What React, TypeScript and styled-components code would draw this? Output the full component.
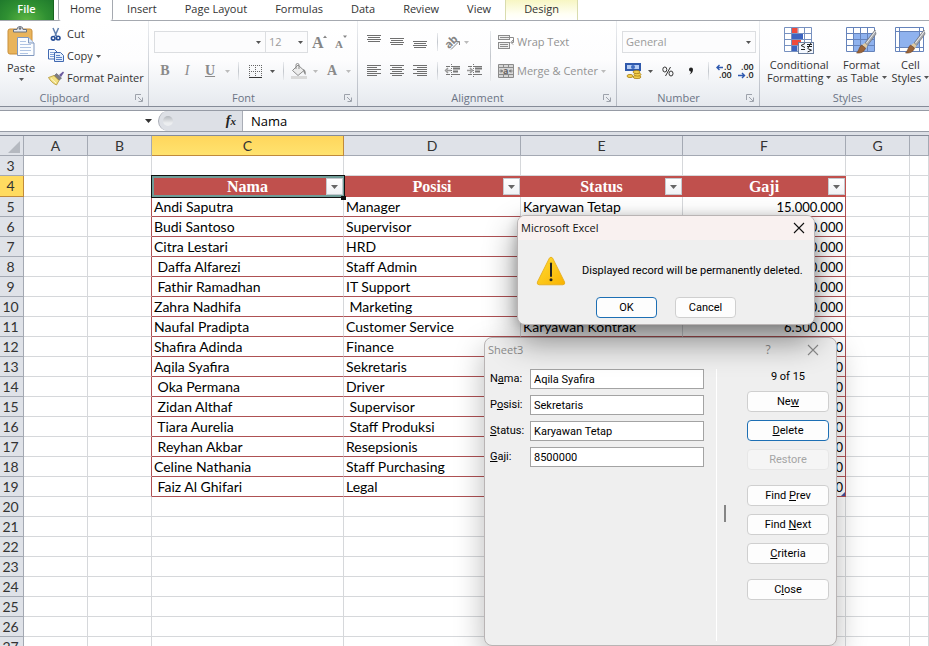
import React from 'react';
import styled, { createGlobalStyle, css } from 'styled-components';

const ui = '"Open Sans", "Noto Sans", sans-serif';
const sheetFont = 'Lato, "Open Sans", sans-serif';
const dialogFont = 'Roboto, "Open Sans", sans-serif';

const GlobalStyle = createGlobalStyle`
  *, *::before, *::after { box-sizing: border-box; }
  body { margin: 0; background: #fff; overflow: hidden; }
  button, input, select { font: inherit; color: inherit; margin: 0; padding: 0; border: 0; background: none; border-radius: 0; outline: none; }
  svg { display: block; flex: none; overflow: visible; }
`;

const Page = styled.div`
  display: flex;
  flex-direction: column;
  height: 100vh;
  overflow: hidden;
  position: relative;
  background: #fff;
  color: #333;
  font: 11px/14px ${ui};
`;

/* ---------- Tabs ---------- */
const TabBar = styled.nav`
  display: flex;
  height: 21px;
  flex: none;
  border-bottom: 1px solid #a5a9b0;
  background: #fff;
`;
const Tab = styled.button<{ $kind?: 'file' | 'active' | 'context' }>`
  padding: 0 14px 2px;
  height: 20px;
  white-space: nowrap;
  ${(p) => p.$kind === 'file' && css`
    width: 54px;
    margin-right: 4px;
    color: #fff;
    font-weight: 600;
    background: radial-gradient(ellipse at 50% 100%, #5cb543 0%, #2f9032 55%, #1f7a2c 100%);
    border-right: 1px solid #17651f;
  `}
  ${(p) => p.$kind === 'active' && css`
    height: 21px;
    padding: 0 11px 3px;
    background: #fff;
    border: solid #a5a9b0;
    border-width: 0 1px;
    border-radius: 0 0 3px 3px;
    border-bottom: 0;
  `}
  ${(p) => p.$kind === 'context' && css`
    padding: 0 18px 2px;
    background: linear-gradient(#f7f6c3, #fffff4 70%, #fff);
    border: solid #d9dcae;
    border-width: 0 1px;
  `}
`;

/* ---------- Ribbon ---------- */
const Ribbon = styled.div`
  display: flex;
  flex: none;
  height: 86px;
  overflow: hidden;
  border-bottom: 1px solid #858b98;
  background: linear-gradient(#fff 0%, #fdfdfe 45%, #eceff3 85%, #e6e9ee 100%);
`;
const Group = styled.section<{ $w: number }>`
  flex: 0 0 ${(p) => p.$w}px;
  display: flex;
  flex-direction: column;
  border-right: 1px solid;
  border-image: linear-gradient(#eceef1, #b3b8c1) 1;
`;
const GroupBody = styled.div`
  flex: 1;
  display: flex;
  padding-left: 5px;
`;
const GroupFooter = styled.footer<{ $plain: boolean }>`
  display: grid;
  grid-template-columns: ${(p) => (p.$plain ? '1fr' : '1fr 19px')};
  align-items: center;
  justify-items: center;
  height: 16px;
  padding-bottom: 1px;
  color: #6b7485;
`;
const Rows = styled.div`
  display: flex;
  flex-direction: column;
  gap: 7px;
  padding-top: 10px;
`;
const Row = styled.div`
  display: flex;
  align-items: center;
  height: 22px;
`;
const Tool = styled.button<{ $w?: number }>`
  display: flex;
  align-items: center;
  justify-content: center;
  width: ${(p) => p.$w ?? 22}px;
  height: 22px;
  color: #8a8a8a;
`;
const Glyph = styled.span<{ $v?: 'b' | 'i' | 'u' }>`
  font: bold 14px/16px "Liberation Serif", serif;
  ${(p) => p.$v === 'i' && 'font-style: italic; font-weight: normal;'}
  ${(p) => p.$v === 'u' && 'text-decoration: underline;'}
`;
const Sep = styled.i<{ $tall?: boolean }>`
  flex: none;
  width: 1px;
  height: ${(p) => (p.$tall ? 50 : 18)}px;
  margin: ${(p) => (p.$tall ? '10px 7px 0 4px' : '0 4px 0 5px')};
  background: linear-gradient(#e9ebee, #c3c7cd 50%, #e9ebee);
`;
const SmallCommand = styled.button<{ $muted?: boolean }>`
  display: flex;
  align-items: center;
  gap: 3px;
  height: 22px;
  white-space: nowrap;
  color: ${(p) => (p.$muted ? '#929292' : '#333')};
`;
const CommandList = styled.div`
  display: flex;
  flex-direction: column;
  padding: 2px 0 0 11px;
`;
const BigCommand = styled.button`
  display: flex;
  flex-direction: column;
  align-items: center;
  padding: 4px 2px 0;
  line-height: 13px;
  white-space: nowrap;
  & > svg:first-child { margin-bottom: 4px; }
  & > svg:last-child { margin-top: 4px; }
`;
const BigLine = styled.span`
  display: flex;
  align-items: center;
  gap: 3px;
`;
const StyleCommands = styled.div`
  display: flex;
  gap: 1px;
  white-space: nowrap;
`;
const Combo = styled.label<{ $w: number }>`
  display: grid;
  align-items: center;
  width: ${(p) => p.$w}px;
  height: 22px;
  border: 1px solid #dcdee1;
  background: #fcfcfd;
  color: #9b9b9b;
  & + & { border-left: 0; }
  & > select { grid-area: 1 / 1; appearance: none; width: 100%; height: 20px; padding-left: 3px; }
  & > svg { grid-area: 1 / 1; justify-self: end; margin-right: 4px; pointer-events: none; }
`;

/* ---------- Formula bar ---------- */
const FormulaBar = styled.div`
  display: flex;
  flex: none;
  height: 22px;
  margin: 3px 0;
  border: solid #969ba5;
  border-width: 1px 0;
  background: #fff;
`;
const BarBand = styled.div`
  flex: none;
  background: #dde0e6;
`;
const NameBox = styled.label`
  display: flex;
  align-items: center;
  width: 158px;
  & > input { flex: 1; min-width: 0; }
  & > svg { margin-right: 6px; }
`;
const FxArea = styled.div`
  display: flex;
  align-items: center;
  justify-content: space-between;
  width: 85px;
  padding: 0 6px 0 4px;
  background: #dde0e6;
  border: 1px solid #a9adb6;
  border-width: 0 1px;
  border-radius: 10px 0 0 10px;
`;
const Knob = styled.span`
  width: 10px;
  height: 10px;
  border-radius: 50%;
  background: linear-gradient(#b4b8be, #eceef0 70%);
`;
const FxButton = styled.button`
  font: italic bold 14px/16px "Liberation Serif", serif;
  color: #222;
  & > small { font-size: 11px; }
`;
const FormulaInput = styled.input`
  flex: 1;
  min-width: 0;
  padding: 0 8px;
  font: 13px/18px ${ui};
  color: #000;
`;

/* ---------- Sheet ---------- */
const SheetArea = styled.main`
  flex: 1;
  min-height: 0;
  overflow: hidden;
  border-top: 1px solid #858b98;
`;
const Grid = styled.table`
  width: 100%;
  table-layout: fixed;
  border-collapse: separate;
  border-spacing: 0;
  font: 14px/18px ${sheetFont};
  color: #000;
`;
const Col = styled.col<{ $w?: number }>`
  ${(p) => p.$w && `width: ${p.$w}px;`}
`;
const ColHead = styled.th<{ $on?: boolean }>`
  height: 20px;
  padding: 0;
  font-weight: normal;
  color: #333;
  border: solid ${(p) => (p.$on ? '#c08a3c' : '#a4a9b3')};
  border-width: 0 1px 1px 0;
  background: ${(p) => (p.$on ? 'linear-gradient(#ffd65c, #ffe36f)' : '#dfe2e8')};
`;
const Corner = styled(ColHead)`
  & > svg { margin: 2px 3px 0 auto; }
`;
const RowHead = styled.th<{ $on?: boolean }>`
  padding: 0 2px 0 0;
  font-weight: normal;
  color: #333;
  border: solid ${(p) => (p.$on ? '#c08a3c' : '#a4a9b3')};
  border-width: 0 1px 1px 0;
  background: ${(p) => (p.$on ? '#ffdb60' : '#dfe2e8')};
`;
const Line = styled.tr<{ $tall?: boolean }>`
  height: ${(p) => (p.$tall ? 21 : 20)}px;
`;
const Cell = styled.td<{ $edge?: boolean; $data?: boolean; $num?: boolean }>`
  padding: 1px 2px 0;
  overflow: hidden;
  white-space: pre;
  border: solid #d6d8db;
  border-width: 0 1px 1px 0;
  ${(p) => p.$data && 'border-bottom-color: #ae5154;'}
  ${(p) => p.$edge && 'border-right-color: #ae5154;'}
  ${(p) => p.$num && 'text-align: right; font-size: 13px; position: relative;'}
`;
const HeadCell = styled.th<{ $selected?: boolean }>`
  position: relative;
  padding: 0;
  background: #c0504d;
  color: #fff;
  font: bold 16px/18px "Liberation Serif", serif;
  ${(p) => p.$selected && css`
    z-index: 1;
    &::before {
      content: '';
      position: absolute;
      right: -2px;
      bottom: -3px;
      width: 5px;
      height: 4px;
      background: #111;
      z-index: 2;
    }
    &::after {
      content: '';
      position: absolute;
      inset: 0;
      border: 2px solid #6f9c97;
      outline: 1px solid #111;
      pointer-events: none;
    }
  `}
`;
const HeadContent = styled.div`
  display: grid;
  grid-template-columns: 1fr 17px;
  align-items: center;
  padding-right: 1px;
  & > span { grid-area: 1 / 1 / 2 / 3; }
`;
const FilterButton = styled.button`
  grid-area: 1 / 2;
  display: grid;
  place-items: center;
  position: relative;
  z-index: 1;
  width: 17px;
  height: 17px;
  border: 1px solid #c5c9cf;
  background: linear-gradient(#fff, #f0f2f5);
`;
const FillHandle = styled.i`
  position: absolute;
  right: 0;
  bottom: 0;
  border: 2px solid #4450a0;
  border-left-color: transparent;
  border-top-color: transparent;
`;

/* ---------- Dialogs ---------- */
const Dialog = styled.section<{ $x: number; $y: number; $w: number; $strong?: boolean }>`
  position: absolute;
  left: ${(p) => p.$x}px;
  top: ${(p) => p.$y}px;
  z-index: 2;
  width: ${(p) => p.$w}px;
  border: 1px solid #b9b4b4;
  border-radius: 8px;
  overflow: hidden;
  background: #efefef;
  color: #000;
  font: 11px/14px ${dialogFont};
  box-shadow: ${(p) => (p.$strong ? '0 16px 32px rgba(0,0,0,.45), 0 2px 12px rgba(0,0,0,.2)' : '0 12px 30px rgba(0,0,0,.28)')};
`;
const TitleBar = styled.header<{ $inactive?: boolean }>`
  display: flex;
  align-items: center;
  height: 24px;
  padding: 0 ${(p) => (p.$inactive ? 17 : 9)}px 0 3px;
  font: 11px/14px ${ui};
  background: ${(p) => (p.$inactive ? 'transparent' : '#f9f1f0')};
  color: ${(p) => (p.$inactive ? '#8b8b8b' : '#111')};
  & > h2 { flex: 1; margin: 0; font: inherit; }
`;
const TitleButton = styled.button`
  display: grid;
  place-items: center;
  width: 12px;
  height: 20px;
  margin-left: 33px;
  font-size: 12px;
`;
const AlertText = styled.div`
  display: flex;
  align-items: center;
  gap: 16px;
  padding: 16px 14px 11px 18px;
  white-space: nowrap;
  & > p { margin: 0; }
`;
const AlertActions = styled.div`
  display: flex;
  justify-content: center;
  gap: 18px;
  padding: 0 0 6px;
`;
const PushButton = styled.button<{ $wide?: boolean; $primary?: boolean; $after?: boolean }>`
  width: ${(p) => (p.$wide ? 82 : 61)}px;
  height: 21px;
  margin-bottom: ${(p) => (p.$after ? 7 : 0)}px;
  border: 1px solid ${(p) => (p.$primary ? '#1d6fb4' : '#cfcfcf')};
  border-radius: 4px;
  background: #fdfdfd;
  &:disabled { color: #a5a5a5; background: #f5f5f5; border-color: #e7e7e7; }
`;
const FormBody = styled.div`
  display: grid;
  grid-template-columns: 217px 10px 9px 1fr;
  padding: 7px 7px 4px 5px;
  height: 283px;
`;
const Fields = styled.form`
  display: flex;
  flex-direction: column;
  gap: 6px;
`;
const Field = styled.label`
  display: grid;
  grid-template-columns: 40px 174px;
  align-items: center;
  & > input { height: 20px; padding: 0 3px; border: 1px solid #a3a3a3; background: #fff; }
`;
const Divider = styled.i`
  justify-self: end;
  width: 1px;
  background: #fff;
`;
const Grip = styled.i`
  align-self: center;
  justify-self: end;
  width: 2px;
  height: 17px;
  margin-top: 16px;
  background: #858585;
`;
const FormActions = styled.div`
  display: flex;
  flex-direction: column;
  align-items: flex-end;
  gap: 8px;
`;
const Counter = styled.output`
  width: 82px;
  height: 14px;
  text-align: center;
  line-height: 16px;
`;

/* ---------- Icons ---------- */
const Arrow = ({ c = '#555', s = 5 }: { c?: string; s?: number }) => (
  <svg width={s} height={s === 7 ? 4 : 3} viewBox="0 0 6 3" preserveAspectRatio="none"><path d="M0 0h6L3 3z" fill={c} /></svg>
);
const Close = () => (
  <svg width="12" height="12" viewBox="0 0 12 12"><path d="M1 1l10 10M11 1L1 11" stroke="currentColor" strokeWidth="1.1" fill="none" /></svg>
);
const Launcher = () => (
  <svg width="8" height="8" viewBox="0 0 8 8" fill="none" stroke="#9da2ab"><path d="M.5 6V.5H6M3 3l4 4M7.5 3.5v4h-4" /></svg>
);
const PasteIcon = () => (
  <svg width="28" height="32" viewBox="0 0 28 32">
    <rect x="1" y="4" width="24" height="25" rx="2" fill="#e9b45b" stroke="#c98f3b" />
    <path d="M6.500 7V4.500h3.500a3 3 0 016 0h3.500V7z" fill="#e8ebf0" stroke="#69717e" />
    <circle cx="13" cy="3.500" r="1.300" fill="#69717e" />
    <path d="M10.500 12.500h11l5.500 5.500v12.500H10.500z" fill="#fbfdff" stroke="#8098bf" />
    <path d="M21.500 12.500V18H27" fill="#dfe9f7" stroke="#8098bf" />
    <path d="M13 16.500h6M13 19.500h11M13 22.500h11M13 25.500h11M13 28.500h8" stroke="#b0c4e3" />
  </svg>
);
const CutIcon = () => (
  <svg width="16" height="16" viewBox="0 0 16 16" fill="none">
    <path d="M5 2l3.500 8M10.500 2L7 10" stroke="#5f7fae" strokeWidth="1.500" />
    <circle cx="5.200" cy="12.300" r="1.800" stroke="#274f97" strokeWidth="1.600" />
    <circle cx="10.200" cy="12" r="1.800" stroke="#274f97" strokeWidth="1.600" />
  </svg>
);
const CopyIcon = () => (
  <svg width="16" height="16" viewBox="0 0 16 16" stroke="#4169b1">
    <path d="M.5 1.500h6l2.500 2.500v7H.5z" fill="#f5f9ff" />
    <path d="M2 4.500h4M2 6.500h4M2 8.500h4" stroke="#7fa0d8" />
    <path d="M6.500 4.500h6l3 3v6h-9z" fill="#e4eefc" />
    <path d="M8 7.500h4M8 9.500h6M8 11.500h6" stroke="#5b83c9" />
  </svg>
);
const PainterIcon = () => (
  <svg width="16" height="16" viewBox="0 0 16 16">
    <path d="M15 1.500L11 5l2 2 3-4.500z" fill="#6b5a9e" />
    <path d="M8.500 3.500l5 4.500-2.500 2.500-5-4.500z" fill="#7d7c83" stroke="#5a5d66" strokeWidth=".6" />
    <path d="M6 5.500L.5 7.500c1.500 3 4.500 6 8 7.500l2.500-4.500z" fill="#f2e083" stroke="#a98820" strokeWidth=".7" />
    <path d="M3 8.500l5 4.500" stroke="#fff8cf" />
  </svg>
);
const BorderIcon = () => (
  <svg width="13" height="13" viewBox="0 0 13 13" stroke="#333" fill="none">
    <path d="M0 .5h13M0 6.500h13M.5 0v12M6.500 0v12M12.500 0v12" strokeDasharray="1 1" stroke="#666" />
    <path d="M0 12.500h13" />
  </svg>
);
const BucketIcon = () => (
  <svg width="16" height="16" viewBox="0 0 16 16">
    <path d="M7 2l6 5.500-6 5L1.500 7.500z" fill="#ececec" stroke="#8d8d8d" />
    <path d="M5 6V2a1.500 1.500 0 013 0v4" fill="none" stroke="#8d8d8d" />
    <path d="M12 6c3 1 3 4 2.500 6C13 11 12.500 9 12 6z" fill="#8d8d8d" />
    <rect y="13" width="16" height="3" fill="#d9d9d9" />
  </svg>
);
const LetterSize = ({ up }: { up?: boolean }) => (
  <svg width="16" height="16" viewBox="0 0 16 16" fill="#858585">
    <text x="0" y="14" fontFamily="Liberation Serif" fontWeight="bold" fontSize={up ? 16 : 11}>A</text>
    {up ? <path d="M11 4h4l-2-2.500z" /> : <path d="M8 1.500h4l-2 2.500z" />}
  </svg>
);
const Lines = ({ rows }: { rows: [number, number, number][] }) => (
  <svg width="15" height="16" viewBox="0 0 15 16" stroke="#6f6f6f">
    {rows.map(([x, y, w]) => <path key={y} d={`M${x} ${y}.5h${w}`} />)}
  </svg>
);
const valign = (y: number): [number, number, number][] => [[0, y, 14], [1, y + 2, 12], [0, y + 4, 14], [1, y + 6, 12]];
const halign = (x: number): [number, number, number][] =>
  [2, 4, 6, 8, 10, 12].map((y, i) => (i % 2 ? [x === 0 ? 0 : x === 1 ? 2 : 4, y, 10] : [0, y, 14]));
const AngleIcon = () => (
  <svg width="16" height="16" viewBox="0 0 16 16" stroke="#858585" fill="none">
    <text x="0" y="12" transform="rotate(-45 6 9)" fontFamily="Open Sans" fontSize="11" fontWeight="bold" fill="#858585" stroke="none">ab</text>
    <path d="M6 15.500l8-8M11 7.500h3.500V11" />
  </svg>
);
const IndentIcon = ({ right }: { right?: boolean }) => (
  <svg width="16" height="16" viewBox="0 0 16 16" stroke="#777" fill="none">
    <path d="M1 3.500h4M7 3.500h8M1 11.500h4M7 11.500h8" />
    <path d="M8 5.500h7M8 8.500h5" strokeWidth="2" />
    <path d="M6.500 1v14" strokeDasharray="1 1" />
    <path d={right ? 'M0 7.500h4M3 5l2.500 2.500L3 10' : 'M2 7.500h4M3 5L.5 7.500 3 10'} strokeWidth="1.500" stroke="#999" />
  </svg>
);
const WrapIcon = () => (
  <svg width="16" height="16" viewBox="0 0 16 16" stroke="#8b8b8b" fill="none">
    <rect x=".5" y="1.500" width="11" height="4" fill="#eee" /><rect x=".5" y="8.500" width="11" height="6" fill="#eee" />
    <path d="M2 3.500h13.500v5h-2M15 6l-2 2.500 2 2M2 10.500h8M2 12.500h8" />
  </svg>
);
const MergeIcon = () => (
  <svg width="16" height="16" viewBox="0 0 16 16" stroke="#8b8b8b" fill="none">
    <path d="M.5 1.500h15v13H.5zM.5 4.500h15M.5 11.500h15M5.500 1.500v3M10.500 1.500v3M5.500 11.500v3M10.500 11.500v3" fill="#d6d6d6" />
    <path d="M1.500 8h3M3 6.500L4.500 8 3 9.500M14.500 8h-3M13 6.500L11.500 8 13 9.500" stroke="#666" />
    <text x="5" y="11" fontFamily="Open Sans" fontSize="9" fontWeight="bold" fill="#666" stroke="none">a</text>
  </svg>
);
const MoneyIcon = () => (
  <svg width="17" height="16" viewBox="0 0 17 16">
    <rect x="0" y="0" width="16" height="8" fill="#2f59ac" />
    <rect x="2" y="2" width="12" height="4" fill="#b7cef5" /><circle cx="8" cy="4" r="2" fill="#3f6cc0" />
    <g fill="#f3cf4a" stroke="#a77d14" strokeWidth=".8"><ellipse cx="12" cy="14" rx="4" ry="1.600" /><ellipse cx="12.500" cy="11.500" rx="3.500" ry="1.600" /><ellipse cx="11.500" cy="9" rx="3.500" ry="1.600" /><ellipse cx="5" cy="13" rx="3" ry="1.600" /></g>
  </svg>
);
const PercentIcon = () => (
  <svg width="12" height="11" viewBox="0 0 12 11" fill="none" stroke="#333">
    <ellipse cx="2.800" cy="3.500" rx="2" ry="2.500" /><ellipse cx="9" cy="7.500" rx="2" ry="2.500" /><path d="M8.500 1L3.500 10" />
  </svg>
);
const CommaIcon = () => (
  <svg width="6" height="8" viewBox="0 0 6 8"><path d="M1 2.500a2 2 0 114 0C5 5 3.500 7 1.500 7.500 2.500 6.500 3 5.500 2.800 4.500A2 2 0 011 2.500z" fill="#222" /></svg>
);
const DecimalIcon = ({ less }: { less?: boolean }) => (
  <svg width="17" height="16" viewBox="0 0 17 16" fontFamily="Open Sans" fontSize="9" fontWeight="600" fill="#222">
    <text x={less ? 3 : 8} y="7">{less ? '.00' : '.0'}</text>
    <text x={less ? 8 : 3} y="15">{less ? '.0' : '.00'}</text>
    <path d={less ? 'M0 12.500h6M4 10l2.500 2.500L4 15' : 'M1 4.500h6M3.500 2L1 4.500 3.500 7'} stroke="#2e59b0" strokeWidth="1.400" fill="none" />
  </svg>
);
const CondIcon = () => (
  <svg width="30" height="29" viewBox="0 0 30 29">
    <path d="M.5 2.500h27v24H.5zM.5 8.500h27M.5 14.500h27M.5 20.500h27M7.500 2.500v24M14 2.500v24M20.500 2.500v24" fill="#fff" stroke="#7791c0" />
    <path d="M8 3h5.500v5H8zM8 15h9v5H8z" fill="#ee4b3c" /><path d="M8 9h11v5H8zM8 21h5v5H8z" fill="#3d64c0" />
    <rect x="14.500" y="17.500" width="15" height="11" fill="#f4f8ff" stroke="#6b7f9f" />
    <path d="M21 18.500l-4 2 4 2M17 24.500h4M23 19.500h5M23 21.500h5M27 18l-3 5M23.500 23.500l4 1.700-4 1.800" stroke="#222" fill="none" />
  </svg>
);
const Brush = () => (
  <g>
    <path d="M29 5L19 18l2.500 2.500L30 9z" fill="#a7a9ad" stroke="#6c6f75" strokeWidth=".7" /><path d="M29.500 6L20.500 18" stroke="#eee" />
    <path d="M19 18l2.500 2.500-1.500 3-4-3.500z" fill="#dfc9a0" />
    <path d="M15.500 20l4 3c-1 4-5 5.500-9 5 2-1 2.500-6 5-8z" fill="#9a6338" stroke="#6f4524" strokeWidth=".6" />
  </g>
);
const TableIcon = () => (
  <svg width="30" height="29" viewBox="0 0 30 29">
    <path d="M.5 2.500h28v24H.5z" fill="#fff" /><path d="M7 9h21v17H7z" fill="#8fb2ee" />
    <path d="M.5 2.500h28v24H.5zM.5 8.500h28M.5 14.500h28M.5 20.500h28M7.500 2.500v24M14.500 2.500v24M21.500 2.500v24" fill="none" stroke="#6583bb" />
    <Brush />
  </svg>
);
const CellIcon = () => (
  <svg width="30" height="29" viewBox="0 0 30 29">
    <path d="M.5 2.500h28v24H.5zM.5 6.500h28M.5 22.500h28M4.500 2.500v24M24.500 2.500v24" fill="#fff" stroke="#6583bb" />
    <path d="M5 7h19v15H5z" fill="#8fb2ee" />
    <Brush />
  </svg>
);
const WarningIcon = () => (
  <svg width="30" height="30" viewBox="0 0 30 30">
    <defs><linearGradient id="warn" x1="0" y1="0" x2="1" y2="1"><stop offset="0" stopColor="#ffdd35" /><stop offset="1" stopColor="#f9b200" /></linearGradient></defs>
    <path d="M13.300 2.200q1.700-2.200 3.400 0L28.600 26q.8 2.500-1.600 2.800H3q-2.400-.3-1.600-2.800z" fill="url(#warn)" stroke="#e5a916" strokeWidth=".8" />
    <path d="M15 7.500V20" stroke="#222" strokeWidth="2" strokeLinecap="round" /><circle cx="15" cy="23.700" r="1.500" fill="#222" />
  </svg>
);

/* ---------- Data ---------- */
const employees: [string, string, string, string][] = [
  ['Andi Saputra', 'Manager', 'Karyawan Tetap', '15.000.000'],
  ['Budi Santoso', 'Supervisor', 'Karyawan Tetap', '10.000.000'],
  ['Citra Lestari', 'HRD', 'Karyawan Tetap', '9.000.000'],
  [' Daffa Alfarezi', 'Staff Admin', 'Karyawan Kontrak', '6.000.000'],
  [' Fathir Ramadhan', 'IT Support', 'Karyawan Tetap', '8.000.000'],
  ['Zahra Nadhifa', ' Marketing', 'Karyawan Kontrak', '7.000.000'],
  ['Naufal Pradipta', 'Customer Service', 'Karyawan Kontrak', '6.500.000'],
  ['Shafira Adinda', 'Finance', 'Karyawan Tetap', '9.500.000'],
  ['Aqila Syafira', 'Sekretaris', 'Karyawan Tetap', '8.500.000'],
  [' Oka Permana', 'Driver', 'Karyawan Kontrak', '5.000.000'],
  [' Zidan Althaf', ' Supervisor', 'Karyawan Tetap', '10.000.000'],
  [' Tiara Aurelia', ' Staff Produksi', 'Karyawan Kontrak', '6.000.000'],
  [' Reyhan Akbar', 'Resepsionis', 'Karyawan Kontrak', '5.500.000'],
  ['Celine Nathania', 'Staff Purchasing', 'Karyawan Tetap', '7.500.000'],
  [' Faiz Al Ghifari', 'Legal', 'Karyawan Tetap', '9.000.000'],
];
const columns = ['A', 'B', 'C', 'D', 'E', 'F', 'G', ''];
const widths = [24, 64, 64, 192, 177, 162, 163, 64];
const headings = ['Nama', 'Posisi', 'Status', 'Gaji'];
const emptyRows = [20, 21, 22, 23, 24, 25, 26, 27];
const record = [['N', 'a', 'ma:', 'Aqila Syafira'], ['P', 'o', 'sisi:', 'Sekretaris'], ['', 'S', 'tatus:', 'Karyawan Tetap'], ['', 'G', 'aji:', '8500000']];

const Blank = ({ n }: { n: number }) => <>{Array.from({ length: n }, (_, i) => <Cell key={i} />)}</>;

function GroupFoot({ label, launcher = true }: { label: string; launcher?: boolean }) {
  return <GroupFooter $plain={!launcher}><span>{label}</span>{launcher && <Launcher />}</GroupFooter>;
}

function RibbonBar() {
  return (
    <Ribbon>
      <Group $w={149}>
        <GroupBody>
          <BigCommand><PasteIcon />Paste<Arrow /></BigCommand>
          <CommandList>
            <SmallCommand><CutIcon />Cut</SmallCommand>
            <SmallCommand><CopyIcon />Copy <Arrow /></SmallCommand>
            <SmallCommand><PainterIcon />Format Painter</SmallCommand>
          </CommandList>
        </GroupBody>
        <GroupFoot label="Clipboard" />
      </Group>
      <Group $w={209}>
        <GroupBody>
          <Rows>
            <Row>
              <Combo $w={112}><select aria-label="Font"><option> </option></select><Arrow /></Combo>
              <Combo $w={42}><select aria-label="Font size"><option>12</option></select><Arrow /></Combo>
              <Tool $w={24} aria-label="Grow font"><LetterSize up /></Tool>
              <Tool aria-label="Shrink font"><LetterSize /></Tool>
            </Row>
            <Row>
              <Tool aria-label="Bold"><Glyph $v="b">B</Glyph></Tool>
              <Tool aria-label="Italic"><Glyph $v="i">I</Glyph></Tool>
              <Tool $w={24} aria-label="Underline"><Glyph $v="u">U</Glyph></Tool>
              <Tool $w={11} aria-label="Underline styles"><Arrow c="#bbb" /></Tool>
              <Sep />
              <Tool $w={24} aria-label="Borders"><BorderIcon /></Tool>
              <Tool $w={11} aria-label="Border styles"><Arrow /></Tool>
              <Sep />
              <Tool aria-label="Fill color"><BucketIcon /></Tool>
              <Tool $w={11} aria-label="Fill colors"><Arrow c="#bbb" /></Tool>
              <Tool aria-label="Font color"><Glyph>A</Glyph></Tool>
              <Tool $w={11} aria-label="Font colors"><Arrow c="#bbb" /></Tool>
            </Row>
          </Rows>
        </GroupBody>
        <GroupFoot label="Font" />
      </Group>
      <Group $w={259}>
        <GroupBody>
          <Rows>
            <Row>
              <Tool $w={23} aria-label="Top align"><Lines rows={valign(1)} /></Tool>
              <Tool $w={23} aria-label="Middle align"><Lines rows={valign(4)} /></Tool>
              <Tool $w={23} aria-label="Bottom align"><Lines rows={valign(7)} /></Tool>
              <Sep />
              <Tool aria-label="Orientation"><AngleIcon /></Tool>
              <Arrow c="#bbb" />
            </Row>
            <Row>
              <Tool $w={23} aria-label="Align left"><Lines rows={halign(0)} /></Tool>
              <Tool $w={23} aria-label="Center"><Lines rows={halign(1)} /></Tool>
              <Tool $w={23} aria-label="Align right"><Lines rows={halign(2)} /></Tool>
              <Sep />
              <Tool aria-label="Decrease indent"><IndentIcon /></Tool>
              <Tool aria-label="Increase indent"><IndentIcon right /></Tool>
            </Row>
          </Rows>
          <Sep $tall />
          <Rows>
            <SmallCommand $muted><WrapIcon />Wrap Text</SmallCommand>
            <SmallCommand $muted><MergeIcon />Merge &amp; Center <Arrow c="#bbb" /></SmallCommand>
          </Rows>
        </GroupBody>
        <GroupFoot label="Alignment" />
      </Group>
      <Group $w={143}>
        <GroupBody>
          <Rows>
            <Row><Combo $w={134}><select aria-label="Number format"><option>General</option></select><Arrow /></Combo></Row>
            <Row>
              <Tool $w={23} aria-label="Accounting format"><MoneyIcon /></Tool>
              <Tool $w={11} aria-label="Currencies"><Arrow /></Tool>
              <Tool $w={23} aria-label="Percent"><PercentIcon /></Tool>
              <Tool $w={24} aria-label="Comma style"><CommaIcon /></Tool>
              <Sep />
              <Tool aria-label="Increase decimal"><DecimalIcon /></Tool>
              <Tool aria-label="Decrease decimal"><DecimalIcon less /></Tool>
            </Row>
          </Rows>
        </GroupBody>
        <GroupFoot label="Number" />
      </Group>
      <Group $w={176}>
        <GroupBody>
          <StyleCommands>
            <BigCommand><CondIcon /><BigLine>Conditional</BigLine><BigLine>Formatting <Arrow /></BigLine></BigCommand>
            <BigCommand><TableIcon /><BigLine>Format</BigLine><BigLine>as Table <Arrow /></BigLine></BigCommand>
            <BigCommand><CellIcon /><BigLine>Cell</BigLine><BigLine>Styles <Arrow /></BigLine></BigCommand>
          </StyleCommands>
        </GroupBody>
        <GroupFoot label="Styles" launcher={false} />
      </Group>
    </Ribbon>
  );
}

function Sheet() {
  return (
    <SheetArea>
      <Grid>
        <colgroup>{widths.map((w, i) => <Col key={i} $w={w} />)}<Col /></colgroup>
        <thead>
          <tr>
            <Corner aria-label="Select all"><svg width="12" height="12"><path d="M12 0v12H0z" fill="#b5b9c0" /></svg></Corner>
            {columns.map((c) => <ColHead key={c} $on={c === 'C'}>{c}</ColHead>)}
          </tr>
        </thead>
        <tbody>
          <Line><RowHead>3</RowHead><Blank n={8} /></Line>
          <Line $tall>
            <RowHead $on>4</RowHead>
            <Blank n={2} />
            {headings.map((h) => (
              <HeadCell key={h} $selected={h === 'Nama'}>
                <HeadContent><span>{h}</span><FilterButton aria-label={`Filter ${h}`}><Arrow s={7} c="#666" /></FilterButton></HeadContent>
              </HeadCell>
            ))}
            <Blank n={2} />
          </Line>
          {employees.map(([name, role, status, pay], i) => (
            <Line key={name}>
              <RowHead>{i + 5}</RowHead>
              <Cell /><Cell $edge />
              <Cell $data>{name}</Cell>
              <Cell $data>{role}</Cell>
              <Cell $data>{status}</Cell>
              <Cell $data $edge $num>{pay}{i === employees.length - 1 && <FillHandle />}</Cell>
              <Blank n={2} />
            </Line>
          ))}
          {emptyRows.map((n) => <Line key={n}><RowHead>{n}</RowHead><Blank n={8} /></Line>)}
        </tbody>
      </Grid>
    </SheetArea>
  );
}

export default function App() {
  return (
    <Page>
      <GlobalStyle />
      <TabBar>
        <Tab $kind="file">File</Tab>
        <Tab $kind="active">Home</Tab>
        {['Insert', 'Page Layout', 'Formulas', 'Data', 'Review', 'View'].map((t) => <Tab key={t}>{t}</Tab>)}
        <Tab $kind="context">Design</Tab>
      </TabBar>
      <RibbonBar />
      <BarBand>
        <FormulaBar>
          <NameBox><input aria-label="Name box" /><Arrow s={7} c="#333" /></NameBox>
          <FxArea><Knob /><FxButton aria-label="Insert function">f<small>x</small></FxButton></FxArea>
          <FormulaInput aria-label="Formula" defaultValue="Nama" />
        </FormulaBar>
      </BarBand>
      <Sheet />

      <Dialog role="dialog" aria-label="Sheet3" $x={484} $y={337} $w={353}>
        <TitleBar $inactive>
          <h2>Sheet3</h2>
          <TitleButton aria-label="Help">?</TitleButton>
          <TitleButton aria-label="Close form"><Close /></TitleButton>
        </TitleBar>
        <FormBody>
          <Fields>
            {record.map(([a, key, b, value]) => (
              <Field key={b}><span>{a}<u>{key}</u>{b}</span><input defaultValue={value} /></Field>
            ))}
          </Fields>
          <Divider />
          <Grip />
          <FormActions>
            <Counter>9 of 15</Counter>
            <PushButton $wide>Ne<u>w</u></PushButton>
            <PushButton $wide $primary><u>D</u>elete</PushButton>
            <PushButton $wide $after disabled>Restore</PushButton>
            <PushButton $wide>Find <u>P</u>rev</PushButton>
            <PushButton $wide>Find <u>N</u>ext</PushButton>
            <PushButton $wide $after><u>C</u>riteria</PushButton>
            <PushButton $wide>C<u>l</u>ose</PushButton>
          </FormActions>
        </FormBody>
      </Dialog>

      <Dialog role="alertdialog" aria-label="Microsoft Excel" $x={517} $y={215} $w={298} $strong>
        <TitleBar>
          <h2>Microsoft Excel</h2>
          <TitleButton aria-label="Close message"><Close /></TitleButton>
        </TitleBar>
        <AlertText><WarningIcon /><p>Displayed record will be permanently deleted.</p></AlertText>
        <AlertActions>
          <PushButton $primary>OK</PushButton>
          <PushButton>Cancel</PushButton>
        </AlertActions>
      </Dialog>
    </Page>
  );
}
